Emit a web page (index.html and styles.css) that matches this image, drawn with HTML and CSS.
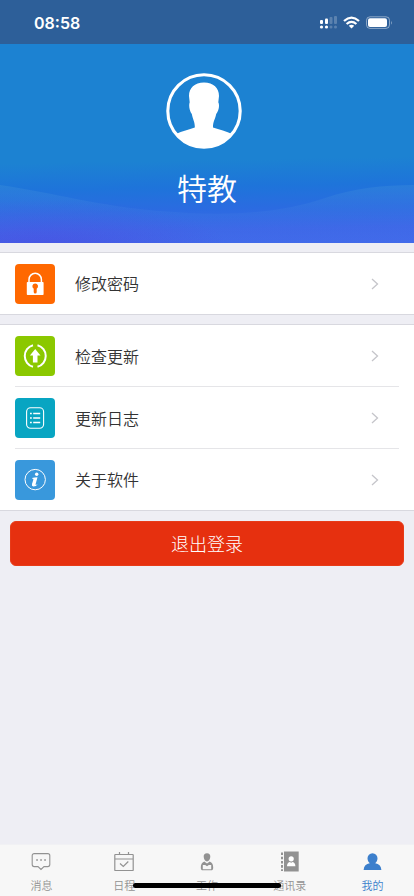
FILE: index.html
```html
<!DOCTYPE html>
<html lang="zh-CN">
<head>
<meta charset="utf-8">
<meta name="viewport" content="width=device-width, initial-scale=1">
<title>我的</title>
<link rel="stylesheet" href="styles.css">
</head>
<body>
<div class="app">
  <header class="status">
    <span class="time">08:58</span>
    <svg class="status-icons" width="76" height="16" viewBox="0 0 76 16" fill="#fff">
      <rect x="1" y="5" width="3" height="4" rx="1"/><rect x="6" y="3.500" width="3" height="5.500" rx="1"/>
      <g opacity=".22"><rect x="10.500" y="2" width="3" height="7" rx="1"/><rect x="15" y="1" width="3" height="8" rx="1"/><circle cx="12" cy="12" r="1.500"/><circle cx="16.500" cy="12" r="1.500"/></g>
      <circle cx="2.500" cy="12" r="1.600"/><circle cx="7.500" cy="12" r="1.600"/>
      <g fill="none" stroke="#fff" stroke-width="2.300"><path d="M25 6Q32.500-.7 40 6"/><path d="M27.600 9Q32.500 4.800 37.400 9"/></g>
      <path d="M29.800 10.800Q32.500 8.600 35.200 10.800L32.500 13.500Z"/>
      <rect x="47.500" y="1.800" width="23" height="11.600" rx="3.500" fill="none" stroke="#fff" opacity=".45"/>
      <rect x="49" y="3.300" width="19" height="8.600" rx="2"/>
      <path d="M72 5.700q1.600 2 0 4Z" opacity=".5"/>
    </svg>
  </header>

  <section class="profile">
    <svg class="waves" viewBox="0 0 414 199" preserveAspectRatio="none">
      <defs>
        <linearGradient id="wave" x1="0" y1="0" x2="0" y2="1"><stop offset="0" stop-color="#4496da" stop-opacity=".3"/><stop offset="1" stop-color="#5178f0" stop-opacity="0"/></linearGradient>
        <radialGradient id="violet" gradientUnits="userSpaceOnUse" cx="0" cy="0" r="1" gradientTransform="translate(40 205) scale(190 50)"><stop offset="0" stop-color="#4a50e2" stop-opacity=".8"/><stop offset="1" stop-color="#4a50e2" stop-opacity="0"/></radialGradient>
      </defs>
      <path fill="url(#violet)" d="M0 120H414V199H0Z"/>
      <path fill="url(#wave)" d="M0 141C55 149 98 162 160 167C220 172 275 171 325 154C355 144 383 141 414 141V199H0Z"/>
    </svg>
    <svg class="avatar" width="78" height="78" viewBox="0 0 78 78">
      <circle cx="39" cy="39" r="36.200" fill="none" stroke="#fff" stroke-width="3.100"/>
      <path fill="#fff" d="M39 10.500C48.500 10.500 54 16 54 24L53.300 30.300C55 33.500 53.500 39 51.200 42C50 48 48 49 48 55.500C54 57.500 62 59.500 67 62A37 37 0 0 1 11 62C17 59 24 57.500 29.800 55.500C30 50 28 48 26.800 42C24.500 39 23.500 33.500 24.700 30.300L24 24C24 16 29.500 10.500 39 10.500Z"/>
    </svg>
    <h1 class="name">特教</h1>
  </section>

  <main>
    <section class="group single">
      <a class="row">
        <svg class="tile orange" viewBox="0 0 40 40"><path d="M14 19v-3.500a6.200 6.200 0 0 1 12.400 0V19" fill="none" stroke="#fff" stroke-width="1.500"/><rect x="11.800" y="18" width="16.800" height="13" rx=".8" fill="#fff"/><path d="M20.200 19.500a2.800 2.800 0 0 1 1.500 5.200V28a1.500 1.500 0 0 1-3 0v-3.300a2.800 2.800 0 0 1 1.500-5.200Z" fill="#ff6800"/></svg>
        <span class="label">修改密码</span><svg class="chev" viewBox="0 0 8 12"><path d="M1 1l5.500 5L1 11"/></svg>
      </a>
    </section>
    <section class="group">
      <a class="row">
        <svg class="tile green" viewBox="0 0 40 40"><g fill="none" stroke="#fff" stroke-width="2"><path d="M18 9.200A11.200 11.200 0 0 0 18 30.800"/><path d="M22.500 9.200A11.200 11.200 0 0 1 22.500 30.800"/></g><path fill="#fff" d="M20.200 13l5.300 6.500h-3V26.500h-4.600v-7h-3Z"/></svg>
        <span class="label">检查更新</span><svg class="chev" viewBox="0 0 8 12"><path d="M1 1l5.500 5L1 11"/></svg>
      </a>
      <a class="row">
        <svg class="tile teal" viewBox="0 0 40 40" fill="none" stroke="#fff"><rect x="11.600" y="9.700" width="17" height="20.600" rx="4" stroke-width="1.100"/><g stroke-width="1.300"><path d="M15 15.500h1.800M15 20h1.800M15 24.500h1.800M18.200 15.500h7M18.200 20h7M18.200 24.500h7"/></g></svg>
        <span class="label">更新日志</span><svg class="chev" viewBox="0 0 8 12"><path d="M1 1l5.500 5L1 11"/></svg>
      </a>
      <a class="row">
        <svg class="tile blue" viewBox="0 0 40 40"><circle cx="20.200" cy="19.600" r="10.200" fill="none" stroke="#fff"/><circle cx="21.700" cy="14.200" r="1.700" fill="#fff"/><path fill="#fff" d="M17 17.900q2.500-.4 5.500-.7l-2 7.200q-.2 1.100 2.300-.5-1.700 2.700-4.500 2.600-1.900-.3-1.300-2.400l1.400-4.700q.1-.8-1.400-1Z"/></svg>
        <span class="label">关于软件</span><svg class="chev" viewBox="0 0 8 12"><path d="M1 1l5.500 5L1 11"/></svg>
      </a>
    </section>
    <button class="logout">退出登录</button>
  </main>

  <nav class="tabs">
    <a class="tab"><svg viewBox="0 0 24 24" fill="none" stroke="#929292" stroke-width="1.100"><path d="M5.200 3.600h13.600a2 2 0 0 1 2 2v9a2 2 0 0 1-2 2H15l-3 2.900-3-2.900H5.200a2 2 0 0 1-2-2v-9a2 2 0 0 1 2-2Z"/><path stroke-width="1.700" d="M7.200 10h1.700M11.200 10h1.700M15.200 10h1.700"/></svg><span>消息</span></a>
    <a class="tab"><svg viewBox="0 0 24 24" fill="none" stroke="#929292" stroke-width="1.200"><rect x="2.800" y="4.500" width="18.400" height="16" rx=".6"/><path d="M3 9h18M7.500 2v2.500M16.500 2v2.500M8 13.500l3.300 3 5-5"/></svg><span>日程</span></a>
    <a class="tab"><svg viewBox="0 0 24 24" fill="#929292"><path d="M12 3.300c2.300 0 3.400 1.400 3.300 3.500-.1 2.500-1.500 4.700-3.300 4.700S8.800 9.300 8.700 6.800C8.600 4.700 9.700 3.300 12 3.300Z"/><path d="M9.300 11.500c-2.500 1-3.500 3.200-3.500 6.200 0 1.700.7 2.600 2.200 2.600h8c1.500 0 2.200-.9 2.200-2.600 0-3-1-5.200-3.500-6.200L12 13.500Z"/><path fill="#f7f7f7" d="M7.800 15h2.400l1.800 1.200 1.800-1.200h2.400v4.300H7.800Z"/></svg><span>工作</span></a>
    <a class="tab"><svg viewBox="0 0 24 24"><path fill="#929292" d="M6 1.500H20.700V21.500H6Z"/><path stroke="#929292" stroke-width="2" stroke-dasharray="2.600 1.600" d="M4 2.500v18.500"/><circle cx="13.200" cy="8.800" r="2.600" fill="#fff"/><path fill="#fff" d="M9 16.200c0-2.300.9-3.800 2.800-4.300l1.400.8 1.400-.8c1.900.5 2.800 2 2.800 4.300Z"/></svg><span>通讯录</span></a>
    <a class="tab active"><svg viewBox="0 0 24 24" fill="#3c7fcc"><path d="M11.500 3.200a5 5 0 0 1 5 5.100c0 2.200-1 4-2.300 5 3.700.6 5.900 2.800 6.200 6.700H2.600c.3-3.900 2.500-6.100 6.200-6.700-1.300-1-2.300-2.800-2.300-5a5 5 0 0 1 5-5.100Z"/></svg><span>我的</span></a>
    <div class="home"></div>
  </nav>
</div>
</body>
</html>
```
FILE: styles.css
```css
* { box-sizing: border-box; }
body { margin: 0; background: #eeeef4; font-family: "Noto Sans CJK SC", sans-serif; color: #333; }
.app { width: 100%; height: 896px; display: flex; flex-direction: column; overflow: hidden; }
.status { height: 44px; flex: none; background: #2d5f99; display: flex; justify-content: space-between; align-items: center; padding: 2px 17px 0 34px; color: #fff; }
.time { font: 600 16px/20px Inter, sans-serif; }
.status-icons { margin-right: 2px; }
.profile { position: relative; height: 199px; flex: none; display: flex; flex-direction: column; align-items: center; padding-top: 28px; background: linear-gradient(179deg, #1c82d2 0%, #1c82d2 58%, #1e74da 71%, #2b6be1 82%, #3d67e7 92%, #426bea 100%); }
.waves { position: absolute; inset: 0; width: 100%; height: 100%; }
.avatar { position: relative; margin-right: 7px; }
.name { position: relative; margin: 15px 0 0; font-size: 30px; line-height: 44px; font-weight: 350; color: #fff; }
.group { background: #fff; border-top: 1px solid #d8d8df; border-bottom: 1px solid #d8d8df; margin-top: 9px; padding: 0 15px; }
.row { height: 62px; display: flex; align-items: center; }
.row:last-child { height: 61px; }
.row + .row { box-shadow: 0 -1px #e5e5e8; }
.tile { width: 40px; height: 40px; border-radius: 4px; flex: none; }
.orange { background: #ff6800; }
.green { background: #8bc800; }
.teal { background: #08a5c2; }
.blue { background: #3998dc; }
.label { flex: 1; margin: -1px 0 0 20px; font-size: 16px; line-height: 24px; font-weight: 350; }
.chev { width: 8px; height: 12px; margin-right: 20px; fill: none; stroke: #c5c5ca; stroke-width: 1.3; }
.logout { display: block; width: calc(100% - 20px); height: 45px; margin: 10px 10px 0; padding: 0 0 1px; border: 1px solid #e73b18; border-radius: 6px; background: #e6300f; color: #fff; font: 300 18px/42px "Noto Sans CJK SC", sans-serif; }
.tabs { position: relative; height: 52px; margin-top: auto; flex: none; display: flex; background: #f7f7f7; border-top: 1px solid #f1f1f4; }
.tab { flex: 1; display: flex; flex-direction: column; align-items: center; padding-top: 5px; color: #929292; font-size: 11px; line-height: 16px; font-weight: 350; }
.tab svg { width: 24px; height: 24px; margin-bottom: 3px; }
.tab.active { color: #3c7fcc; }
.home { position: absolute; left: 133px; bottom: 8px; width: 148px; height: 5px; border-radius: 3px; background: #000; }
```
